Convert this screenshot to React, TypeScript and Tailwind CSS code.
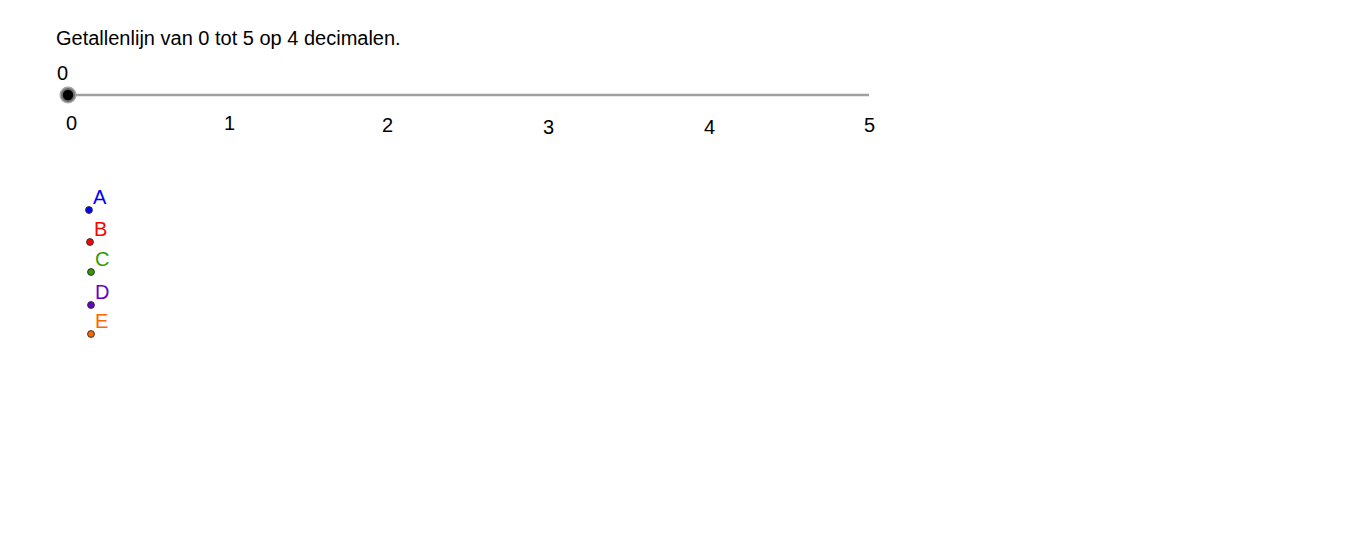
import React from "react";

const ticks = [
  { t: "0", x: "left-[66px]", y: "top-[113px]" },
  { t: "1", x: "left-[224px]", y: "top-[113px]" },
  { t: "2", x: "left-[382px]", y: "top-[115px]" },
  { t: "3", x: "left-[543px]", y: "top-[117px]" },
  { t: "4", x: "left-[704px]", y: "top-[117px]" },
  { t: "5", x: "left-[864px]", y: "top-[115px]" },
];

const points = [
  { t: "A", cls: "left-[93px] top-[187px] text-[#0000ff]", cx: 89, cy: 210, fill: "#0000ff" },
  { t: "B", cls: "left-[94px] top-[219px] text-[#ff0000]", cx: 90, cy: 242, fill: "#ff0000" },
  { t: "C", cls: "left-[95px] top-[249px] text-[#339900]", cx: 91, cy: 272, fill: "#339900" },
  { t: "D", cls: "left-[95px] top-[282px] text-[#6600cc]", cx: 91, cy: 305, fill: "#6600cc" },
  { t: "E", cls: "left-[95px] top-[311px] text-[#ff6600]", cx: 91, cy: 334, fill: "#ff6600" },
];

export default function App() {
  return (
    <div className="relative w-[1366px] h-[558px] overflow-hidden bg-white font-['Liberation_Sans',Arial,sans-serif] text-black">
      <div className="pl-[56px] pt-[28px] text-[20px] leading-[20px]">
        Getallenlijn van 0 tot 5 op 4 decimalen.
      </div>

      <svg
        className="absolute left-0 top-0"
        width={1366}
        height={558}
        viewBox="0 0 1366 558"
      >
        <line x1={68} y1={95} x2={869} y2={95} stroke="#a0a0a0" strokeWidth={2.5} />
        <circle cx={68} cy={95} r={8.5} fill="#a5a5a5" />
        <circle cx={68} cy={95} r={7} fill="#6e6e6e" />
        <circle cx={68} cy={95} r={5.2} fill="#000000" />
        {points.map((p) => (
          <circle key={p.t} cx={p.cx} cy={p.cy} r={3.4} fill={p.fill} stroke="#333333" strokeWidth={1} />
        ))}
      </svg>

      <span className="absolute left-[57px] top-[63px] text-[20px] leading-[20px]">0</span>
      {ticks.map((k) => (
        <span key={k.t} className={`absolute ${k.x} ${k.y} text-[20px] leading-[20px]`}>
          {k.t}
        </span>
      ))}
      {points.map((p) => (
        <span key={p.t} className={`absolute ${p.cls} text-[20px] leading-[20px]`}>
          {p.t}
        </span>
      ))}
    </div>
  );
}
